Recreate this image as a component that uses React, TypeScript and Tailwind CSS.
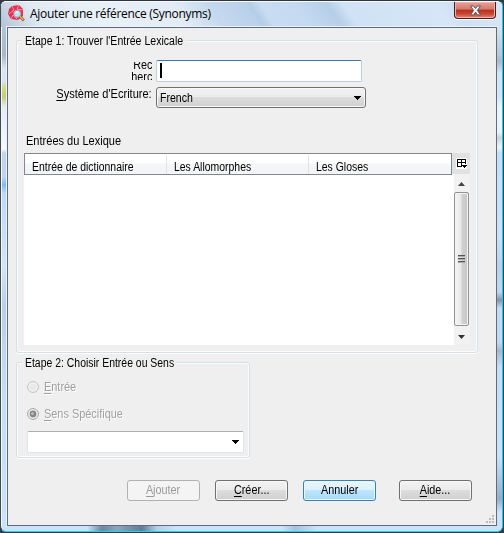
import React from 'react';

const cols = ['Entrée de dictionnaire', 'Les Allomorphes', 'Les Gloses'];

function Arrow({ className = '' }: { className?: string }) {
  return (
    <svg className={className} width="7" height="4" viewBox="0 0 7 4" shapeRendering="crispEdges">
      <path d="M0 0h7v1H6v1H5v1H4v1H3V3H2V2H1V1H0z" fill="#000" />
    </svg>
  );
}

function Logo() {
  return (
    <svg width="17" height="17" viewBox="0 0 17 17">
      <path d="M4 1 11 0l4 4v7l-5 4-7-1-3-5 1-5z" fill="#e5304f" />
      <path d="M4 1l2 4-5 4M11 0 9 4l6 1M3 14l2-4 4 4" stroke="#ff8da2" fill="none" />
      <circle cx="9.2" cy="8.8" r="3.4" fill="#bfe4f4" stroke="#a9a3b9" strokeWidth="1.2" />
      <path d="M7.5 8q1-2 3-1" stroke="#fff" fill="none" />
      <path d="m11.8 11.3 4 4.2" stroke="#8a5a20" strokeWidth="2.6" />
      <path d="m11.8 11.3 3.6 3.8" stroke="#f0bd54" strokeWidth="1.3" />
    </svg>
  );
}

function Button({ children, className }: { children: React.ReactNode; className: string }) {
  return (
    <button className={`flex h-[21px] w-[73px] items-center justify-center rounded-[3px] border pb-px text-[12px] leading-[14px] ${className}`}>
      <span className="inline-block scale-x-[0.9]">{children}</span>
    </button>
  );
}

const gray = 'border-[#707070] bg-[linear-gradient(#f2f2f2_0%,#ebebeb_48%,#dddddd_50%,#cfcfcf_100%)] shadow-[inset_0_0_0_1px_#f8f8f8]';

function Radio({ label, rest, checked = false }: { label: string; rest: string; checked?: boolean }) {
  return (
    <label className="flex h-[14px] items-center gap-[5px] text-[12px] leading-[14px] text-[#a0a0a0]">
      <svg width="12" height="12" viewBox="0 0 12 12">
        <circle cx="6" cy="6" r="5.4" fill="#f4f4f4" stroke={checked ? '#a0a0a0' : '#c0c0c0'} />
        {checked ? (
          <>
            <circle cx="6" cy="6" r="3.4" fill="#858585" />
            <circle cx="5.5" cy="5.5" r="1.5" fill="#b8b8b8" />
          </>
        ) : (
          <circle cx="6" cy="6" r="3.5" fill="#e8e8e8" />
        )}
      </svg>
      <span className="inline-block origin-left scale-x-[0.91] [text-shadow:1px_1px_0_#fff]"><u className="underline-offset-2">{label}</u>{rest}</span>
    </label>
  );
}

export default function App() {
  return (
    <div className="flex h-[533px] w-[504px] bg-[#343b46] font-['Liberation_Sans',Arial,sans-serif] text-black">
      <div className="flex h-[532px] w-[503px] flex-col overflow-hidden rounded-[6px] border border-b-[#23cfee] border-l-[#414855] border-r-[#00d5f5] border-t-[#30343d] bg-[#cae2fb] shadow-[inset_1px_1px_0_#f5faff]">
        <header className="flex h-[26px] shrink-0 justify-between rounded-t-[5px] border-t border-[#f5faff] bg-[linear-gradient(55deg,#b3c3d5_0%,#dfe9f3_8%,#e9f1f8_20%,#e2ecf6_36%,#c5d9ee_43%,#b9d1ea_50%,#b5cde6_51%,#c8dcf2_53%,#c4daf1_60%,#b6cee7_66%,#d0e2f5_69%,#d7e6f6_87%,#d0e1f3_90%,#d8e7f6_100%)] pl-[7px] pr-[6px]">
          <div className="flex items-start gap-[5px] pt-[3px]">
            <Logo />
            <h1 className="pt-px font-['Open_Sans',sans-serif] text-[12px] leading-[16px] tracking-[-0.3px]">Ajouter une référence (Synonyms)</h1>
          </div>
          <button aria-label="Fermer" className="flex h-[17px] w-[42px] items-center justify-center rounded-b-[4px] border border-t-0 border-[#461d25] bg-[linear-gradient(#e7a399_0%,#d5796c_45%,#b5301c_50%,#c94835_75%,#e88676_100%)] shadow-[inset_0_0_0_1px_#efb1a8,0_1px_0_#fff]">
            <svg width="13" height="11" viewBox="0 0 13 11">
              <path d="M1.5 1h3l2 2.5 2-2.5h3L8.4 5.5l3.1 4.4h-3l-2-2.7-2 2.7h-3l3.1-4.4z" fill="#f5f5f5" stroke="#595765" />
            </svg>
          </button>
        </header>

        <div className="flex h-[499px] shrink-0">
          <div className="w-[6px] shrink-0 border-l border-[#f5faff] bg-[linear-gradient(#b4c4d5_0px,#a9b6c5_28px,#dbe5f2_42px,#d9e2f0_54px,#d1da78_62px,#c6ce75_70px,#e6ecf0_80px,#eaf0fb_92px,#f8f9ff_122px,#c0d5ed_126px,#bed3ed_150px,#80b9f7_158px,#bcd9f7_166px,#d0e5fb_240px,#b8cee9_280px,#c4def8_370px,#cae2fb_499px)]" />
          <main className="flex h-[499px] w-[490px] shrink-0 flex-col border border-[#606b7b] bg-[#efefef] pl-2 pt-3 shadow-[0_0_0_1px_#e7f4ff]">
            <section className="flex h-[313px] w-[462px] shrink-0 flex-col rounded-[3px] border border-[#d5dfe5] shadow-[inset_0_0_0_1px_#fafcfd,0_1px_0_#fff]">
              <h2 className="-mt-[7px] ml-[5px] h-[14px] w-[165px] shrink-0 whitespace-nowrap bg-[#efefef] pl-[3px] text-[12px] leading-[15px]">
                <span className="inline-block origin-left scale-x-[0.88]">Etape 1: Trouver l'Entrée Lexicale</span>
              </h2>
              <div className="mt-3 flex h-[22px] shrink-0">
                <div className="mr-1 mt-[2px] flex h-[18px] w-[135px] items-end justify-end overflow-hidden text-right text-[12px] leading-[12px]">
                  <span className="-mb-[3px] block origin-right scale-x-[0.9]">Rec<br />herc</span>
                </div>
                <div className="flex w-[206px] items-start rounded-[2px] border border-[#b5cfe7] border-t-[#3d7bad] bg-white pl-[3px] pt-[2px]">
                  <i className="h-[15px] w-[2px] bg-black" />
                </div>
              </div>
              <div className="mt-[5px] flex h-[21px] shrink-0">
                <label className="mr-1 w-[135px] whitespace-nowrap text-right text-[12px] leading-[15px]">
                  <span className="inline-block origin-right scale-x-[0.92]"><u className="underline-offset-2">S</u>ystème d'Ecriture:</span>
                </label>
                <div className={`flex w-[210px] items-center justify-between rounded-[3px] border pl-[3px] pr-1 text-[12px] ${gray}`}>
                  <span className="inline-block origin-left scale-x-[0.88] pt-px">French</span><Arrow />
                </div>
              </div>
              <h3 className="ml-[9px] mt-[26px] h-[19px] shrink-0 text-[12px] leading-[14px]">
                <span className="inline-block origin-left scale-x-[0.92]">Entrées du Lexique</span>
              </h3>
              <div className="ml-[7px] flex h-[192px] w-[446px] shrink-0">
                <div className="flex w-[428px] flex-col bg-white">
                  <div className="flex h-[22px] border border-[#828790] bg-[linear-gradient(#fff_45%,#f5f6f8_50%,#f3f4f6_100%)] pt-px text-[12px] leading-[24px]">
                    {cols.map((c, i) => (
                      <div key={c} className={i < 2 ? 'w-[142px] border-r border-[#dfe3e8] pl-[7px]' : 'pl-[7px]'}>
                        <span className="inline-block origin-left scale-x-[0.87]">{c}</span>
                      </div>
                    ))}
                  </div>
                </div>
                <div className="flex w-[18px] flex-col bg-white">
                  <div className="flex h-[21px] items-center justify-center bg-[#e1e1e1]">
                    <svg width="11" height="11" viewBox="0 0 11 11" shapeRendering="crispEdges">
                      <path d="M0 0h11v11H0z" fill="#fff" />
                      <path d="M1 1h9v1H1zM1 1h1v8H1zM5 1h1v7H5zM9 1h1v5H9zM1 4h9v1H1zM1 8h5v1H1z" fill="#000" />
                      <path d="M6 7h5v1h-1v1H9v1H8V9H7V8H6z" fill="#000" />
                    </svg>
                  </div>
                  <div className="ml-[2px] flex h-[171px] w-[16px] flex-col items-center bg-[#f2f2f2] pr-px">
                    <svg className="mt-2 shrink-0" width="7" height="4" viewBox="0 0 7 4"><path d="M0 4 3.5 0 7 4z" fill="#444" /></svg>
                    <div className="mt-[6px] flex h-[134px] w-[15px] shrink-0 flex-col items-center justify-center gap-px rounded-[2px] border border-[#929292] bg-[linear-gradient(90deg,#f6f6f6,#e8e8e8_45%,#d0d0d0_55%,#c8c8c8)] shadow-[inset_0_0_0_1px_#f3f3f3]">
                      <i className="h-[2px] w-[7px] border-t border-[#555] bg-[#aaa]" />
                      <i className="h-[2px] w-[7px] border-t border-[#555] bg-[#aaa]" />
                      <i className="h-[2px] w-[7px] border-t border-[#555] bg-[#aaa]" />
                    </div>
                    <svg className="mt-[9px] shrink-0" width="7" height="4" viewBox="0 0 7 4"><path d="M0 0h7L3.5 4z" fill="#333" /></svg>
                  </div>
                </div>
              </div>
            </section>

            <section className="mt-[9px] flex h-[96px] w-[234px] shrink-0 flex-col rounded-[3px] border border-[#d5dfe5] shadow-[inset_0_0_0_1px_#fafcfd,0_1px_0_#fff]">
              <h2 className="-mt-[7px] ml-[5px] h-[14px] w-[154px] shrink-0 whitespace-nowrap bg-[#efefef] pl-[3px] text-[12px] leading-[15px]">
                <span className="inline-block origin-left scale-x-[0.87]">Etape 2: Choisir Entrée ou Sens</span>
              </h2>
              <div className="ml-[10px] mt-[10px] flex flex-col gap-[13px]">
                <Radio label="E" rest="ntrée" />
                <Radio label="S" rest="ens Spécifique" checked />
              </div>
              <div className="ml-[10px] mt-[10px] flex h-[22px] w-[217px] shrink-0 items-center justify-end rounded-[2px] border border-[#e1e4e9] border-t-[#abadb3] bg-white pr-1"><Arrow /></div>
            </section>

            <footer className="ml-[111px] mt-[22px] flex">
              <Button className="mr-[15px] border-[#adb2b5] bg-[#f4f4f4] text-[#9a9a9a]"><u className="underline-offset-2">A</u>jouter</Button>
              <Button className={`mr-[15px] ${gray}`}><u className="underline-offset-2">C</u>réer...</Button>
              <Button className="mr-[23px] border-[#3c7fb1] bg-[linear-gradient(#eaf6fd_0%,#d9f0fc_48%,#bee6fd_50%,#a7d9f5_100%)] shadow-[inset_0_0_0_1px_#e9f8ff]">Annuler</Button>
              <Button className={gray}><u className="underline-offset-2">A</u>ide...</Button>
            </footer>
            <svg className="ml-[470px] mt-[14px] shrink-0" width="9" height="9" viewBox="0 0 9 9">
              <path d="M6 0h2v2H6zM3 3h2v2H3zM6 3h2v2H6zM0 6h2v2H0zM3 6h2v2H3zM6 6h2v2H6z" fill="#bcbcbc" />
            </svg>
          </main>
          <div className="flex-1 bg-[linear-gradient(#d5e5f3_0px,#b4c8da_28px,#a7b9c9_34px,#cfe6fb_46px,#cfe7fc_70px,#e8f5ff_80px,#e8f5ff_105px,#cbd3dc_111px,#e9f6ff_120px,#c2e0fc_126px,#c9e3fc_210px,#b7d0ec_240px,#c0d9f3_265px,#8194ad_273px,#c0dbf5_281px,#bfdaf4_315px,#a5b8d0_324px,#c5dff9_340px,#c8e2fb_430px,#96afc8_472px,#cae2fb_485px)]" />
        </div>
        <div className="ml-[6px] h-[5px] shrink-0 bg-[linear-gradient(90deg,#cae2fb_80px,#70869e_95px,#8fa5bc_110px,#647b96_135px,#b7cfe6_150px,#cae2fb_170px,#cae2fb_275px,#a9c1dc_288px,#cae2fb_310px)]" />
      </div>
    </div>
  );
}
